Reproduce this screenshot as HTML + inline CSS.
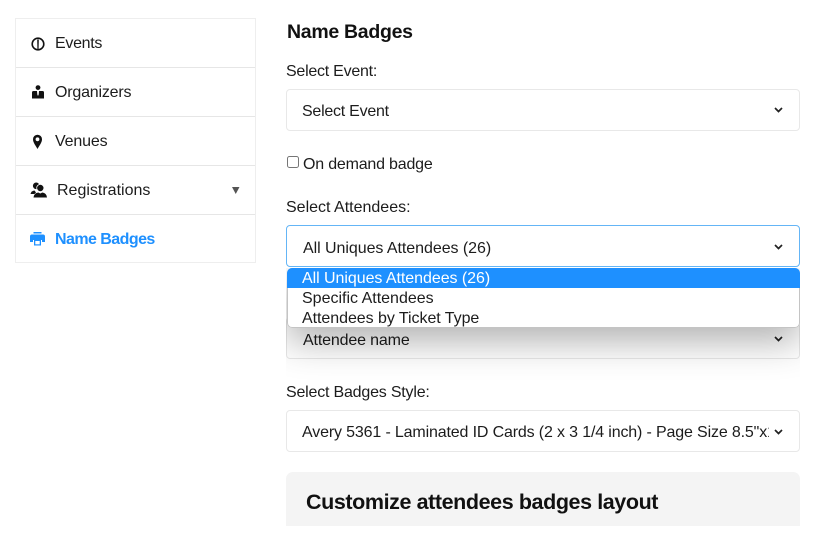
<!DOCTYPE html>
<html><head><meta charset="utf-8">
<style>
html,body{margin:0;padding:0;background:#fff}
body{width:815px;height:545px;position:relative;overflow:hidden;font-family:"Liberation Sans",sans-serif;color:#1c1c1c;font-size:16px}
.a{position:absolute;white-space:nowrap}
.side{position:absolute;left:15px;top:18px;width:239px;height:243px;border:1px solid #eee;box-sizing:content-box}
.sep{position:absolute;left:16px;width:239px;height:1px;background:#e6e6e6}
.sel{position:absolute;left:286px;width:514px;height:42px;box-sizing:border-box;border:1px solid #e8e8e8;border-radius:4px;background:#fff}
.t{line-height:20px}
svg{position:absolute;overflow:visible}
</style></head><body>

<div class="side"></div>
<div class="sep" style="top:67px"></div>
<div class="sep" style="top:116px"></div>
<div class="sep" style="top:165px"></div>
<div class="sep" style="top:214px"></div>

<svg style="left:31px;top:37px" width="14" height="14" viewBox="0 0 14 14"><circle cx="7" cy="7" r="5.800" fill="none" stroke="#111" stroke-width="1.600"/><path d="M6.200 2.500h1.600l-.2 9.500h-1.200z" fill="#111"/></svg>
<div class="a t" style="left:55px;top:34px;letter-spacing:-.3px">Events</div>

<svg style="left:31px;top:85px" width="14" height="14" viewBox="0 0 14 14"><circle cx="7" cy="2.600" r="2.400" fill="#111"/><path d="M1 13.500V7.500Q1 6 2.500 6H11.500Q13 6 13 7.500V13.500Z" fill="#111"/><path d="M6 6h2l-.3 3.500L7 11 6.300 9.500z" fill="#fff"/></svg>
<div class="a t" style="left:55px;top:83px;letter-spacing:-.2px">Organizers</div>

<svg style="left:31px;top:134px" width="13" height="15" viewBox="0 0 13 15"><path d="M6.500 15C4.500 11.200 2 8.500 2 5.200A4.500 4.500 0 0 1 11 5.200C11 8.500 8.500 11.200 6.500 15Z" fill="#111"/><circle cx="6.500" cy="5.300" r="1.900" fill="#fff"/></svg>
<div class="a t" style="left:55px;top:132px;letter-spacing:-.15px">Venues</div>

<svg style="left:30px;top:182px" width="17" height="16" viewBox="0 0 17 16"><circle cx="6.200" cy="3.800" r="3.300" fill="#111"/><path d="M0.500 12Q1 9 4.500 8.500L6 10.500L4.500 12Z" fill="#111"/><circle cx="10.300" cy="6" r="3.600" fill="#111" stroke="#fff" stroke-width=".8"/><path d="M3.500 15.500Q4 11 8.300 10.500L10.300 11.500 12.300 10.500Q16.500 11 17 15.500Z" fill="#111"/></svg>
<div class="a t" style="left:57px;top:181px">Registrations</div>
<svg style="left:232px;top:187px" width="8" height="7" viewBox="0 0 8 7"><path d="M0 0H7.500L3.750 7Z" fill="#555"/></svg>

<svg style="left:30px;top:232px" width="15" height="14" viewBox="0 0 15 14"><path d="M3.500 0H11.500V1.500H3.500Z" fill="#1e90ff"/><path d="M2 2.500H13Q15 2.500 15 4.500V10H12V8H3V10H0V4.500Q0 2.500 2 2.500Z" fill="#1e90ff"/><path d="M4 8H11V13.500H4Z" fill="#1e90ff"/><path d="M5.300 9H9.700V12.300H5.300Z" fill="#fff"/></svg>
<div class="a t" style="left:55px;top:230px;font-weight:bold;color:#1e90ff;letter-spacing:-.55px">Name Badges</div>

<div class="a" style="left:287px;top:20px;font-size:19.500px;line-height:24px;font-weight:bold;color:#111;letter-spacing:-.3px">Name Badges</div>
<div class="a t" style="left:286px;top:62px;letter-spacing:-.25px">Select Event:</div>
<div class="sel" style="top:89px"></div>
<div class="a t" style="left:302px;top:102px;letter-spacing:-.25px">Select Event</div>
<svg style="left:774px;top:107px" width="9" height="6" viewBox="0 0 9 6"><path d="M1 1L4.500 4.500L8 1" fill="none" stroke="#222" stroke-width="1.700"/></svg>

<div class="a" style="left:287px;top:156px;width:10px;height:10px;border:1px solid #767676;border-radius:2.500px;background:#fff"></div>
<div class="a t" style="left:303px;top:155px;letter-spacing:-.2px">On demand badge</div>

<div class="a t" style="left:286px;top:198px">Select Attendees:</div>
<div class="sel" style="top:225px;border-color:#64b5f6"></div>
<div class="a t" style="left:303px;top:239px;letter-spacing:-.05px">All Uniques Attendees (26)</div>
<svg style="left:774px;top:244px" width="9" height="6" viewBox="0 0 9 6"><path d="M1 1L4.500 4.500L8 1" fill="none" stroke="#222" stroke-width="1.700"/></svg>

<div class="sel" style="top:317px"></div>
<div class="a t" style="left:303px;top:331px;letter-spacing:-.15px">Attendee name</div>
<svg style="left:774px;top:336px" width="9" height="6" viewBox="0 0 9 6"><path d="M1 1L4.500 4.500L8 1" fill="none" stroke="#222" stroke-width="1.700"/></svg>

<div class="a" style="left:286px;top:268px;width:514px;height:112px;overflow:hidden">
  <div style="position:absolute;left:1px;top:0;width:513px;height:60px;border-radius:5px;box-shadow:0 14px 36px rgba(0,0,0,.3)"></div>
</div>
<div class="a" style="left:287px;top:268px;width:513px;height:60px;box-sizing:border-box;background:#fff;border-radius:5px;overflow:hidden;box-shadow:inset 0 0 0 1px #c4c4c4">
  <div style="position:absolute;left:0;top:0;width:100%;height:20px;background:#1e90ff"></div>
  <div class="a t" style="left:15px;top:1px;color:#fff;letter-spacing:-.05px">All Uniques Attendees (26)</div>
  <div class="a t" style="left:15px;top:21px">Specific Attendees</div>
  <div class="a t" style="left:15px;top:41px;letter-spacing:-.05px">Attendees by Ticket Type</div>
</div>

<div class="a t" style="left:286px;top:383px;letter-spacing:-.2px">Select Badges Style:</div>
<div class="sel" style="top:410px"></div>
<div class="a t" style="left:302px;top:423px;width:467px;overflow:hidden;letter-spacing:-.15px">Avery 5361 - Laminated ID Cards (2 x 3 1/4 inch) - Page Size 8.5"x11"</div>
<svg style="left:774px;top:429px" width="9" height="6" viewBox="0 0 9 6"><path d="M1 1L4.500 4.500L8 1" fill="none" stroke="#222" stroke-width="1.700"/></svg>

<div class="a" style="left:286px;top:472px;width:514px;height:54px;background:#f4f4f4;border-radius:7px 7px 0 0"></div>
<div class="a" style="left:306px;top:488px;font-size:21.500px;line-height:28px;font-weight:bold;color:#111;letter-spacing:-.41px">Customize attendees badges layout</div>
</body></html>
